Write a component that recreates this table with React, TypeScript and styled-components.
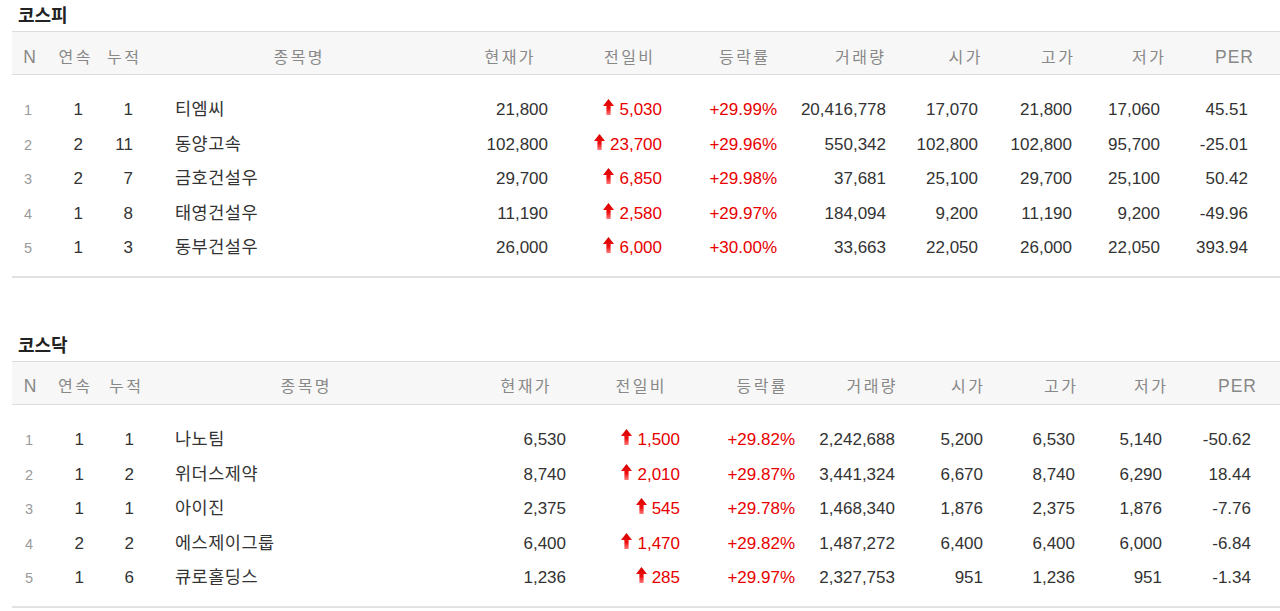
import React from "react";
import styled, { createGlobalStyle } from "styled-components";

const GlobalStyle = createGlobalStyle`
  html, body { margin: 0; padding: 0; background: #fff; }
  body { font-family: "Liberation Sans", "Noto Sans CJK KR", sans-serif; color: #333; }
`;

type Col = { w: number; pad: number };

const Page = styled.div`
  padding: 0 0 0 12px;
  display: flex;
  flex-direction: column;
  gap: 52px;
`;

const Section = styled.section`
  display: flex;
  flex-direction: column;
`;

const Title = styled.h2`
  margin: 0 0 3px 6px;
  font-family: "Noto Sans CJK KR", sans-serif;
  font-size: 18px;
  font-weight: 700;
  line-height: 28px;
  color: #222;
`;

const HeadRow = styled.div<{ $cols: string }>`
  display: grid;
  grid-template-columns: ${(p) => p.$cols};
  height: 44px;
  box-sizing: border-box;
  padding-top: 14.5px;
  align-items: baseline;
  background: #f7f7f7;
  border-top: 1px solid #dcdcdc;
  border-bottom: 1px solid #dcdcdc;
`;

const HeadCell = styled.div<{ $latin?: boolean }>`
  text-align: center;
  white-space: nowrap;
  line-height: 20px;
  font-family: "Liberation Sans", "Noto Sans CJK KR", sans-serif;
  font-size: ${(p) => (p.$latin ? 17.5 : 16)}px;
  letter-spacing: ${(p) => (p.$latin ? 1 : 2.5)}px;
  text-indent: ${(p) => (p.$latin ? 1 : 2.5)}px;
  color: #888;
`;

const Body = styled.div`
  display: flex;
  flex-direction: column;
  padding: 15px 0 13px;
  border-bottom: 2px solid #e2e2e2;
`;

const Row = styled.div<{ $cols: string }>`
  display: grid;
  grid-template-columns: ${(p) => p.$cols};
  height: 34.6px;
  box-sizing: border-box;
  padding-top: 8px;
  align-items: baseline;
`;

const Cell = styled.div<{ $pad: number }>`
  display: flex;
  justify-content: flex-end;
  align-items: baseline;
  white-space: nowrap;
  line-height: 20px;
  padding-right: ${(p) => p.$pad}px;
  font-size: 17px;
  color: #333;
`;

const RankCell = styled(Cell)`
  font-size: 14.5px;
  color: #9a9a9a;
`;

const NameCell = styled.div<{ $pad: number }>`
  white-space: nowrap;
  line-height: 20px;
  padding-left: ${(p) => p.$pad}px;
  font-family: "Noto Sans CJK KR", sans-serif;
  font-size: 17.5px;
  letter-spacing: 0.5px;
  color: #333;
`;

const UpCell = styled(Cell)`
  color: #e80000;
  gap: 5px;
`;

const Arrow = styled.svg`
  width: 11px;
  height: 16px;
  flex: none;
`;

const UpArrow = ({ id }: { id: string }) => (
  <Arrow viewBox="0 0 11 16">
    <defs>
      <linearGradient id={id} x1="0" y1="0" x2="0" y2="1">
        <stop offset="0" stopColor="#d80000" />
        <stop offset="0.6" stopColor="#ee1010" />
        <stop offset="1" stopColor="#ff7a7a" />
      </linearGradient>
    </defs>
    <path d="M5.5 0 L11 7 L7.6 7 L7.6 16 L3.4 16 L3.4 7 L0 7 Z" fill={`url(#${id})`} />
  </Arrow>
);

type Stock = {
  n: number;
  streak: number;
  total: number;
  name: string;
  price: string;
  diff: string;
  rate: string;
  volume: string;
  open: string;
  high: string;
  low: string;
  per: string;
};

const headers = ["N", "연속", "누적", "종목명", "현재가", "전일비", "등락률", "거래량", "시가", "고가", "저가", "PER"];

const kospi: Stock[] = [
  { n: 1, streak: 1, total: 1, name: "티엠씨", price: "21,800", diff: "5,030", rate: "+29.99%", volume: "20,416,778", open: "17,070", high: "21,800", low: "17,060", per: "45.51" },
  { n: 2, streak: 2, total: 11, name: "동양고속", price: "102,800", diff: "23,700", rate: "+29.96%", volume: "550,342", open: "102,800", high: "102,800", low: "95,700", per: "-25.01" },
  { n: 3, streak: 2, total: 7, name: "금호건설우", price: "29,700", diff: "6,850", rate: "+29.98%", volume: "37,681", open: "25,100", high: "29,700", low: "25,100", per: "50.42" },
  { n: 4, streak: 1, total: 8, name: "태영건설우", price: "11,190", diff: "2,580", rate: "+29.97%", volume: "184,094", open: "9,200", high: "11,190", low: "9,200", per: "-49.96" },
  { n: 5, streak: 1, total: 3, name: "동부건설우", price: "26,000", diff: "6,000", rate: "+30.00%", volume: "33,663", open: "22,050", high: "26,000", low: "22,050", per: "393.94" },
];

const kosdaq: Stock[] = [
  { n: 1, streak: 1, total: 1, name: "나노팀", price: "6,530", diff: "1,500", rate: "+29.82%", volume: "2,242,688", open: "5,200", high: "6,530", low: "5,140", per: "-50.62" },
  { n: 2, streak: 1, total: 2, name: "위더스제약", price: "8,740", diff: "2,010", rate: "+29.87%", volume: "3,441,324", open: "6,670", high: "8,740", low: "6,290", per: "18.44" },
  { n: 3, streak: 1, total: 1, name: "아이진", price: "2,375", diff: "545", rate: "+29.78%", volume: "1,468,340", open: "1,876", high: "2,375", low: "1,876", per: "-7.76" },
  { n: 4, streak: 2, total: 2, name: "에스제이그룹", price: "6,400", diff: "1,470", rate: "+29.82%", volume: "1,487,272", open: "6,400", high: "6,400", low: "6,000", per: "-6.84" },
  { n: 5, streak: 1, total: 6, name: "큐로홀딩스", price: "1,236", diff: "285", rate: "+29.97%", volume: "2,327,753", open: "951", high: "1,236", low: "951", per: "-1.34" },
];

const kospiCols: Col[] = [
  { w: 35, pad: 15 }, { w: 55, pad: 19 }, { w: 42, pad: 11 }, { w: 308, pad: 31 },
  { w: 114, pad: 18 }, { w: 125, pad: 29 }, { w: 105, pad: 19 }, { w: 127, pad: 37 },
  { w: 83, pad: 28 }, { w: 102, pad: 36 }, { w: 80, pad: 28 }, { w: 92, pad: 32 },
];

const kosdaqCols: Col[] = [
  { w: 36, pad: 15 }, { w: 52, pad: 16 }, { w: 50, pad: 16 }, { w: 310, pad: 25 },
  { w: 130, pad: 24 }, { w: 100, pad: 10 }, { w: 142, pad: 37 }, { w: 78, pad: 15 },
  { w: 114, pad: 41 }, { w: 72, pad: 21 }, { w: 108, pad: 42 }, { w: 66, pad: 19 },
];

const StockTable = ({ title, cols, rows, id }: { title: string; cols: Col[]; rows: Stock[]; id: string }) => {
  const template = cols.map((c) => `${c.w}px`).join(" ");
  const p = cols.map((c) => c.pad);
  return (
    <Section>
      <Title>{title}</Title>
      <HeadRow $cols={template}>
        {headers.map((h) => (
          <HeadCell key={h} $latin={/^[A-Z]+$/.test(h)}>
            {h}
          </HeadCell>
        ))}
      </HeadRow>
      <Body>
        {rows.map((r) => (
          <Row key={r.n} $cols={template}>
            <RankCell $pad={p[0]}>{r.n}</RankCell>
            <Cell $pad={p[1]}>{r.streak}</Cell>
            <Cell $pad={p[2]}>{r.total}</Cell>
            <NameCell $pad={p[3]}>{r.name}</NameCell>
            <Cell $pad={p[4]}>{r.price}</Cell>
            <UpCell $pad={p[5]}>
              <UpArrow id={`${id}-arrow-${r.n}`} />
              <span>{r.diff}</span>
            </UpCell>
            <UpCell $pad={p[6]}>{r.rate}</UpCell>
            <Cell $pad={p[7]}>{r.volume}</Cell>
            <Cell $pad={p[8]}>{r.open}</Cell>
            <Cell $pad={p[9]}>{r.high}</Cell>
            <Cell $pad={p[10]}>{r.low}</Cell>
            <Cell $pad={p[11]}>{r.per}</Cell>
          </Row>
        ))}
      </Body>
    </Section>
  );
};

export default function App() {
  return (
    <>
      <GlobalStyle />
      <Page>
        <StockTable title="코스피" cols={kospiCols} rows={kospi} id="kospi" />
        <StockTable title="코스닥" cols={kosdaqCols} rows={kosdaq} id="kosdaq" />
      </Page>
    </>
  );
}
